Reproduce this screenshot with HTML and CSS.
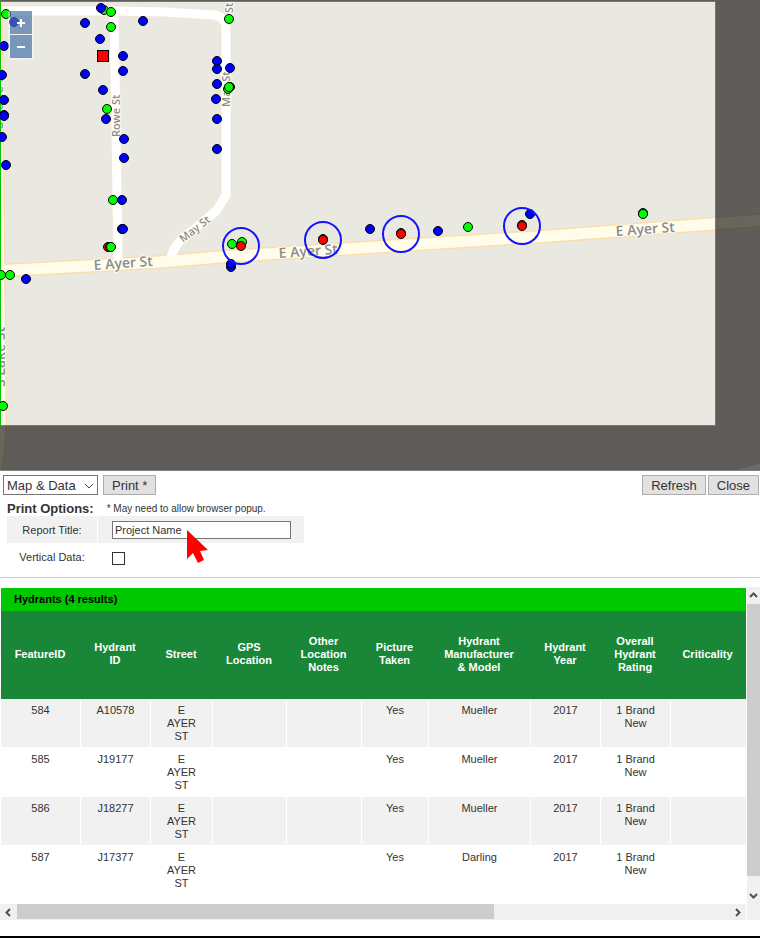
FILE: index.html
```
<!DOCTYPE html>
<html lang="en">
<head>
    <meta charset="UTF-8">
    <meta name="viewport" content="width=device-width, initial-scale=1.0">
    <title>Hydrants Report</title>
    <link rel="stylesheet" href="styles.css">
</head>
<body>
    <div class="map">
        <svg class="map-canvas" viewBox="0 0 760 470" role="img" aria-label="Hydrant map">
            <rect class="land" width="760" height="470"/>
            <!-- roads -->
            <path class="road-edge" d="M0 11H115L165 12L214 15Q226 17 226 28V195L217 210L202 223L183 238Q175 245 171 257"/>
            <path class="road-edge" d="M114 11L116 130L118 262"/>
            <path class="main-edge" d="M-4 0L-1 300L0 420Q0 450 -6 475"/>
            <path class="main-edge" d="M-5 271L160 262L220 257L550 236L765 220"/>
            <path class="road" d="M0 11H115L165 12L214 15Q226 17 226 28V195L217 210L202 223L183 238Q175 245 171 257"/>
            <path class="road" d="M114 11L116 130L118 260"/>
            <path class="main" d="M-4 0L-1 300L0 420Q0 450 -6 475"/>
            <path class="main" d="M-5 271L160 262L220 257L550 236L765 220"/>
            <!-- street names -->
            <text class="street" transform="translate(94 270) rotate(-4)">E Ayer St</text>
            <text class="street" transform="translate(279 258) rotate(-4)">E Ayer St</text>
            <text class="street" transform="translate(616 236) rotate(-4)">E Ayer St</text>
            <text class="street small" transform="translate(120 137) rotate(-90)">Rowe St</text>
            <text class="street small" transform="translate(230 107) rotate(-90)">May St</text>
            <text class="street small" transform="translate(233 13) rotate(-90)">St</text>
            <text class="street small" transform="translate(183 243) rotate(-38)">May St</text>
            <text class="street" transform="translate(5 387) rotate(-90)">S Lake St</text>
            <text class="street" transform="translate(3 129) rotate(-90)">S Lake St</text>
            <!-- outside the print area -->
            <path class="shade" d="M0 0H760V470H0ZM0 1V426H716V1Z"/>
            <path class="corner" d="M738 470L760 463V470Z"/>
            <rect class="extent" x="0.5" y="1.5" width="715" height="424"/>
            <path class="extent-left" d="M0.5 1V426"/>
            <!-- features -->
            <g class="blue">
                <circle cx="14" cy="22" r="4.5"/>
                <circle cx="4" cy="46" r="4.5"/>
                <circle cx="2" cy="75" r="4.5"/>
                <circle cx="4" cy="100" r="4.5"/>
                <circle cx="4" cy="115" r="4.5"/>
                <circle cx="4" cy="116" r="4.5"/>
                <circle cx="2" cy="137" r="4.5"/>
                <circle cx="6" cy="165" r="4.5"/>
                <circle cx="26" cy="279" r="4.5"/>
                <circle cx="85" cy="23" r="4.5"/>
                <circle cx="143" cy="21" r="4.5"/>
                <circle cx="100" cy="39" r="4.5"/>
                <circle cx="123" cy="56" r="4.5"/>
                <circle cx="123" cy="71" r="4.5"/>
                <circle cx="85" cy="74" r="4.5"/>
                <circle cx="103" cy="90" r="4.5"/>
                <circle cx="106" cy="119" r="4.5"/>
                <circle cx="124" cy="139" r="4.5"/>
                <circle cx="124" cy="158" r="4.5"/>
                <circle cx="122" cy="200" r="4.5"/>
                <circle cx="122" cy="229" r="4.5"/>
                <circle cx="123" cy="229" r="4.5"/>
                <circle cx="217" cy="61" r="4.5"/>
                <circle cx="217" cy="69" r="4.5"/>
                <circle cx="230" cy="68" r="4.5"/>
                <circle cx="217" cy="84" r="4.5"/>
                <circle cx="216" cy="99" r="4.5"/>
                <circle cx="217" cy="119" r="4.5"/>
                <circle cx="217" cy="149" r="4.5"/>
                <circle cx="231" cy="267" r="4.5"/>
                <circle cx="231" cy="264" r="4.5"/>
                <circle cx="370" cy="229" r="4.5"/>
                <circle cx="438" cy="231" r="4.5"/>
                <circle cx="530" cy="214" r="4.5"/>
            </g>
            <g class="red">
                <rect x="97.5" y="50.5" width="11" height="11"/>
                <circle cx="108" cy="247" r="4.5"/>
                <circle cx="230" cy="87" r="4.5"/>
            </g>
            <g class="green">
                <circle cx="6" cy="14" r="4.5"/>
                <circle cx="104" cy="10" r="4.5"/>
                <circle cx="111" cy="12" r="4.5"/>
                <circle cx="111" cy="27" r="4.5"/>
                <circle cx="107" cy="109" r="4.5"/>
                <circle cx="113" cy="200" r="4.5"/>
                <circle cx="110" cy="247" r="4.5"/>
                <circle cx="111" cy="247" r="4.5"/>
                <circle cx="229" cy="19" r="4.5"/>
                <circle cx="228" cy="89" r="4.5"/>
                <circle cx="229" cy="87" r="4.5"/>
                <circle cx="1" cy="275" r="4.5"/>
                <circle cx="10" cy="275" r="4.5"/>
                <circle cx="3" cy="406" r="4.5"/>
                <circle cx="232" cy="244" r="4.5"/>
                <circle cx="242" cy="242" r="4.5"/>
                <circle cx="323" cy="239" r="4.5"/>
                <circle cx="401" cy="233" r="4.5"/>
                <circle cx="468" cy="227" r="4.5"/>
                <circle cx="522" cy="225" r="4.5"/>
                <circle cx="643" cy="213" r="4.5"/>
                <circle cx="643" cy="214" r="4.5"/>
            </g>
            <g class="blue">
                <circle cx="101" cy="8" r="4.5"/>
            </g>
            <g class="red">
                <circle cx="241" cy="246" r="4.5"/>
                <circle cx="323" cy="240" r="4.5"/>
                <circle cx="401" cy="234" r="4.5"/>
                <circle cx="522" cy="226" r="4.5"/>
            </g>
            <g class="selection">
                <circle cx="241" cy="246" r="18"/>
                <circle cx="323" cy="240" r="18"/>
                <circle cx="401" cy="234" r="18"/>
                <circle cx="522" cy="226" r="18"/>
            </g>
        </svg>
        <div class="zoom">
            <button type="button" aria-label="Zoom in">
                <svg viewBox="0 0 22 22"><path d="M11 7V15M7 11H15"/></svg>
            </button>
            <button type="button" aria-label="Zoom out">
                <svg viewBox="0 0 22 22"><path d="M7 11H15"/></svg>
            </button>
        </div>
    </div>

    <div class="toolbar">
        <div class="select-wrap">
            <select class="mode" aria-label="Print content">
                <option>Map &amp; Data</option>
                <option>Map</option>
                <option>Data</option>
            </select>
            <svg class="chevron" viewBox="0 0 10 6"><path d="M1 1L5 5L9 1"/></svg>
        </div>
        <button class="btn" type="button">Print *</button>
        <button class="btn refresh" type="button">Refresh</button>
        <button class="btn" type="button">Close</button>
    </div>

    <form class="options">
        <div class="options-head">
            <h3>Print Options:</h3>
            <span class="note">* May need to allow browser popup.</span>
        </div>
        <div class="option shaded">
            <label for="report-title">Report Title:</label>
            <div class="field">
                <input type="text" id="report-title" value="Project Name">
            </div>
        </div>
        <div class="option">
            <label for="vertical-data">Vertical Data:</label>
            <div class="field">
                <input type="checkbox" id="vertical-data">
            </div>
        </div>
        <svg class="pointer" viewBox="0 0 22 34"><path d="M0 0L21 20L13 21L17 30L11 33L6 23L0 29Z"/></svg>
    </form>

    <div class="results">
        <div class="table-wrap">
            <table>
                <caption>Hydrants (4 results)</caption>
                <colgroup>
                    <col class="c-feature">
                    <col class="c-id">
                    <col class="c-street">
                    <col class="c-gps">
                    <col class="c-notes">
                    <col class="c-picture">
                    <col class="c-model">
                    <col class="c-year">
                    <col class="c-rating">
                    <col class="c-critical">
                </colgroup>
                <thead>
                    <tr>
                        <th>FeatureID</th>
                        <th>Hydrant ID</th>
                        <th>Street</th>
                        <th>GPS Location</th>
                        <th>Other Location Notes</th>
                        <th>Picture Taken</th>
                        <th>Hydrant Manufacturer &amp; Model</th>
                        <th>Hydrant Year</th>
                        <th>Overall Hydrant Rating</th>
                        <th>Criticality</th>
                    </tr>
                </thead>
                <tbody>
                    <tr>
                        <td>584</td>
                        <td>A10578</td>
                        <td>E AYER ST</td>
                        <td></td>
                        <td></td>
                        <td>Yes</td>
                        <td>Mueller</td>
                        <td>2017</td>
                        <td>1 Brand New</td>
                        <td></td>
                    </tr>
                    <tr>
                        <td>585</td>
                        <td>J19177</td>
                        <td>E AYER ST</td>
                        <td></td>
                        <td></td>
                        <td>Yes</td>
                        <td>Mueller</td>
                        <td>2017</td>
                        <td>1 Brand New</td>
                        <td></td>
                    </tr>
                    <tr>
                        <td>586</td>
                        <td>J18277</td>
                        <td>E AYER ST</td>
                        <td></td>
                        <td></td>
                        <td>Yes</td>
                        <td>Mueller</td>
                        <td>2017</td>
                        <td>1 Brand New</td>
                        <td></td>
                    </tr>
                    <tr>
                        <td>587</td>
                        <td>J17377</td>
                        <td>E AYER ST</td>
                        <td></td>
                        <td></td>
                        <td>Yes</td>
                        <td>Darling</td>
                        <td>2017</td>
                        <td>1 Brand New</td>
                        <td></td>
                    </tr>
                </tbody>
            </table>
        </div>
        <div class="vbar">
            <button type="button" aria-label="Scroll up"><svg viewBox="0 0 9 9"><path d="M1 6L4.500 2.500L8 6"/></svg></button>
            <div class="track"><div class="thumb"></div></div>
            <button type="button" aria-label="Scroll down"><svg viewBox="0 0 9 9"><path d="M1 3L4.500 6.500L8 3"/></svg></button>
        </div>
        <div class="hbar">
            <button type="button" aria-label="Scroll left"><svg viewBox="0 0 9 9"><path d="M6 1L2.500 4.500L6 8"/></svg></button>
            <div class="track"><div class="thumb"></div></div>
            <button type="button" aria-label="Scroll right"><svg viewBox="0 0 9 9"><path d="M3 1L6.500 4.500L3 8"/></svg></button>
        </div>
    </div>
</body>
</html>
```
FILE: styles.css
```
* {
    box-sizing: border-box;
}

body {
    margin: 0;
    font-family: "Liberation Sans", Arial, sans-serif;
    font-size: 11px;
    line-height: 13px;
    color: #333;
    background-color: #fff;
    border-bottom: 2px solid #000;
}

button {
    font-family: inherit;
    cursor: pointer;
}

/* map */
.map {
    position: relative;
    border-bottom: 1px solid #808080;
}

.map-canvas {
    display: block;
    width: 100%;
}

.land {
    fill: #eae9e1;
}

.road-edge,
.road,
.main-edge,
.main {
    fill: none;
    stroke-linejoin: round;
}

.road-edge {
    stroke: #f0e8d6;
    stroke-width: 11;
}

.road {
    stroke: #fff;
    stroke-width: 9;
}

.main-edge {
    stroke: #f9dfae;
    stroke-width: 14;
}

.main {
    stroke: #fffdea;
    stroke-width: 11;
}

.street {
    font-family: "Open Sans", "Noto Sans", sans-serif;
    font-size: 14px;
    font-weight: 600;
    fill: #8c8c8c;
    stroke: #fffdf4;
    stroke-width: 2;
    paint-order: stroke;
}

.small {
    font-size: 11px;
}

.shade {
    fill: #000;
    fill-opacity: 0.6;
    fill-rule: evenodd;
}

.corner {
    fill: #6a6a68;
}

.extent {
    fill: none;
    stroke: #22b422;
}

.extent-left {
    stroke: #00c800;
}

.blue,
.green,
.red {
    stroke: #000;
}

.blue {
    fill: #00f;
}

.green {
    fill: #0f0;
}

.red {
    fill: #f00;
}

.selection {
    fill: none;
    stroke: #1414ff;
    stroke-width: 2;
}

.zoom {
    position: absolute;
    top: 9px;
    left: 8px;
    display: flex;
    flex-direction: column;
    gap: 1px;
    padding: 2px;
    border-radius: 4px;
    background-color: rgba(255, 255, 255, 0.4);
}

.zoom button {
    width: 22px;
    height: 23px;
    padding: 0;
    border: none;
    background-color: rgba(0, 60, 136, 0.5);
}

.zoom svg {
    display: block;
    width: 22px;
    height: 22px;
    fill: none;
    stroke: #fff;
    stroke-width: 2;
}

/* toolbar */
.toolbar {
    display: flex;
    gap: 2px;
    padding: 4px 1px 0 3px;
}

.select-wrap {
    position: relative;
    margin-right: 3px;
}

.mode,
.btn {
    height: 20px;
    font-family: inherit;
    font-size: 13px;
    color: #333;
}

.mode {
    display: block;
    width: 95px;
    padding: 0 3px;
    appearance: none;
    border: 1px solid #767676;
    border-radius: 0;
    background-color: #fff;
}

.chevron {
    position: absolute;
    top: 8px;
    right: 4px;
    width: 10px;
    height: 6px;
    fill: none;
    stroke: #444;
    pointer-events: none;
}

.btn {
    padding: 0 8px;
    border: 1px solid #adadad;
    background-color: #e1e1e1;
}

.refresh {
    margin-left: auto;
}

/* print options */
.options {
    position: relative;
    padding: 5px 7px 7px;
    border-bottom: 1px solid #ccc;
}

.options-head {
    display: flex;
    align-items: center;
    gap: 13px;
    height: 16px;
}

.options h3 {
    margin: 0;
    font-size: 13px;
}

.note {
    font-size: 10px;
}

.option {
    display: grid;
    grid-template-columns: 90px 206px;
    gap: 1px;
    height: 27px;
}

.option label,
.field {
    display: flex;
    align-items: center;
}

.option label {
    justify-content: center;
    padding-top: 2px;
}

.field {
    padding-left: 14px;
}

.shaded label,
.shaded .field {
    background-color: #f1f1f1;
}

.options input[type="text"] {
    width: 179px;
    height: 18px;
    padding: 0 2px;
    border: 1px solid #767676;
    font-family: inherit;
    font-size: 11px;
    color: #333;
}

.options input[type="checkbox"] {
    appearance: none;
    width: 13px;
    height: 13px;
    margin: 4px 0 0;
    border: 1px solid #333;
    background-color: #fff;
}

.pointer {
    position: absolute;
    top: 35px;
    left: 187px;
    width: 22px;
    height: 34px;
    fill: #f00;
}

/* results */
.results {
    display: grid;
    grid-template-columns: 1fr 13px;
    column-gap: 1px;
    margin: 9px 0 16px;
}

.table-wrap {
    padding: 1px 0 9px 1px;
    overflow: hidden;
}

table {
    width: 100%;
    table-layout: fixed;
    border-collapse: separate;
    border-spacing: 0;
    text-align: center;
}

caption {
    padding: 5px 13px;
    background-color: #00c800;
    color: #000;
    font-weight: bold;
    text-align: left;
}

th {
    height: 88px;
    padding: 0 12px 2px 10px;
    background-color: #198737;
    color: #fff;
}

td {
    height: 49px;
    padding: 5px 12px 4px;
    border-right: 1px solid #fff;
    border-bottom: 1px solid #fff;
    vertical-align: top;
}

td:last-child {
    border-right: none;
}

tbody tr:nth-child(odd) {
    background-color: #f1f1f1;
}

.c-feature { width: 80px; }
.c-id { width: 70px; }
.c-street { width: 62px; }
.c-gps { width: 74px; }
.c-notes { width: 75px; }
.c-picture { width: 67px; }
.c-model { width: 102px; }
.c-year { width: 70px; }
.c-rating { width: 70px; }
.c-critical { width: 75px; }

/* scrollbars */
.vbar,
.hbar {
    display: flex;
    background-color: #f0f0f0;
}

.vbar {
    grid-column: 2;
    grid-row: 1 / 3;
    flex-direction: column;
    padding-bottom: 16px;
}

.hbar {
    grid-column: 1;
    height: 16px;
}

.track {
    flex: 1;
}

.thumb {
    background-color: #cdcdcd;
}

.vbar .thumb {
    height: 96%;
}

.hbar .thumb {
    width: 67%;
    height: 15px;
}

.vbar button,
.hbar button {
    display: flex;
    align-items: center;
    justify-content: center;
    padding: 0;
    border: none;
    background-color: #f0f0f0;
}

.vbar button {
    height: 17px;
}

.hbar button {
    width: 17px;
}

.vbar svg,
.hbar svg {
    width: 9px;
    height: 9px;
    fill: none;
    stroke: #505050;
    stroke-width: 2;
}
```
